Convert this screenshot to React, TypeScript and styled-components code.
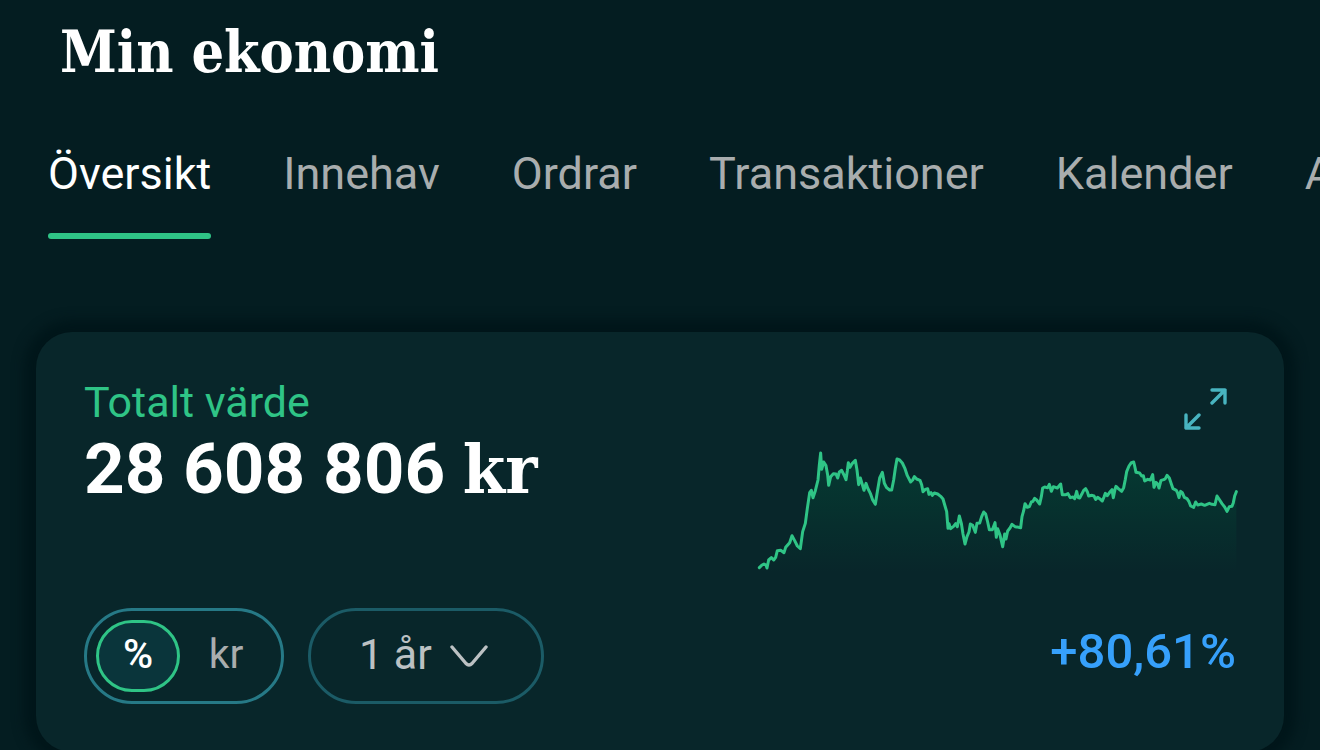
import React from "react";
import styled, { createGlobalStyle } from "styled-components";

const color = {
  page: "#041d21",
  card: "#08262a",
  green: "#2fc486",
  teal: "#48b4c0",
  muted: "#a9adae",
  blue: "#36a0fb",
};

const sans = `Roboto, "Liberation Sans", sans-serif`;
const slab = `"Roboto Slab", "DejaVu Serif Condensed", "DejaVu Serif", serif`;

const GlobalStyle = createGlobalStyle`
  * { box-sizing: border-box; }
  html { scrollbar-width: none; background: ${color.page}; }
  body { margin: 0; font-family: ${sans}; color: #fff; }
  button, select { font: inherit; color: inherit; }
`;

const Page = styled.div`
  display: flex;
  flex-direction: column;
  overflow-x: hidden;
`;

const Title = styled.h1`
  margin: 0;
  padding: 12px 60px 0;
  font: 700 57px/80px ${slab};
`;

const Tabs = styled.nav`
  display: flex;
  gap: 72px;
  padding: 54px 48px 0;
  overflow: hidden;
`;

const Tab = styled.a<{ $active?: boolean }>`
  flex: none;
  padding-bottom: 31px;
  border-bottom: 0;
  font-size: 45px;
  line-height: 56px;
  white-space: nowrap;
  text-decoration: none;
  color: ${(p) => (p.$active ? "#fff" : color.muted)};

  &::after {
    content: "";
    display: block;
    height: 6px;
    margin-top: 31px;
    border-radius: 3px;
    background: ${(p) => (p.$active ? color.green : "transparent")};
  }
`;

const Card = styled.section`
  display: flex;
  flex-direction: column;
  gap: 36px;
  margin: 62px 36px 36px;
  padding: 44px 48px 48px;
  border-radius: 36px;
  background: ${color.card};
  box-shadow: 0 0 12px 12px #01161a;
`;

const Row = styled.div<{ $align: string }>`
  display: flex;
  justify-content: space-between;
  align-items: ${(p) => p.$align};
`;

const Label = styled.h2`
  margin: 0;
  font-size: 43px;
  font-weight: 400;
  line-height: 52px;
  color: ${color.green};
`;

const Total = styled.p`
  margin: 0;
  font-size: 71px;
  font-weight: 700;
  line-height: 82px;
  white-space: nowrap;
`;

const Currency = styled.span`
  font-family: ${slab};
  font-size: 68px;
`;

const ChartColumn = styled.div`
  display: flex;
  flex-direction: column;
  align-items: flex-end;
`;

const ExpandButton = styled.button`
  display: flex;
  padding: 12px 8px;
  border: 0;
  background: none;
  color: ${color.teal};
`;

const Chart = styled.svg`
  display: block;
  width: 480px;
  height: 128px;
  overflow: visible;
`;

const Controls = styled.div`
  display: flex;
  gap: 24px;
`;

const Toggle = styled.div`
  display: flex;
  height: 96px;
  padding: 9px;
  border: 3px solid #267986;
  border-radius: 48px;
`;

const ToggleOption = styled.button<{ $active?: boolean }>`
  width: ${(p) => (p.$active ? 84 : 92)}px;
  padding: 0 0 4px;
  border: 3px solid ${(p) => (p.$active ? color.green : "transparent")};
  border-radius: 36px;
  background: ${(p) => (p.$active ? "#0a353b" : "none")};
  font-size: 41px;
  font-weight: ${(p) => (p.$active ? 500 : 400)};
  line-height: 48px;
  color: ${(p) => (p.$active ? "#fff" : color.muted)};
`;

const Period = styled.label`
  display: grid;
  align-items: center;
  width: 236px;
  height: 96px;
  border: 3px solid #1b5b66;
  border-radius: 48px;
  color: #bcc1c3;

  > * {
    grid-area: 1 / 1;
  }
`;

const PeriodSelect = styled.select`
  appearance: none;
  width: 100%;
  height: 100%;
  padding: 0 0 4px 48px;
  border: 0;
  border-radius: 48px;
  background: none;
  font-size: 43px;
`;

const Chevron = styled.svg`
  justify-self: end;
  margin-right: 52px;
  pointer-events: none;
`;

const Change = styled.output`
  padding-bottom: 8px;
  font-size: 49px;
  font-weight: 500;
  line-height: 56px;
  color: ${color.blue};
`;

const tabs = ["Översikt", "Innehav", "Ordrar", "Transaktioner", "Kalender", "Analys"];

// Portfolio value over the last year, in chart units.
const history =
  "58,413 66,405 72,402 78,405 81,414 86,390 94,383 101,390 107,382 112,362 122,361 132,368 137,352 149,338 156,317 164,332 172,348 181,356 188,305 196,280 202,235 209,188 214,181 219,203 226,182 234,150 238,105 242,69 245,118 251,96 258,107 263,135 266,166 272,140 280,131 288,132 293,144 298,126 305,121 312,135 318,149 322,122 325,98 330,112 337,100 346,91 351,120 356,164 361,144 366,160 372,181 378,160 383,174 391,190 398,210 406,223 412,185 419,144 427,127 433,160 440,173 449,180 455,180 461,150 466,115 471,87 479,90 487,99 495,116 502,137 512,156 518,150 523,140 530,147 540,151 545,164 549,185 556,178 563,176 567,193 573,188 577,196 583,189 593,192 602,199 609,207 615,228 620,245 624,295 627,281 632,296 640,290 647,281 652,290 658,258 664,280 669,312 675,342 681,320 687,306 691,282 698,286 706,307 711,280 719,279 725,260 731,246 737,252 743,276 748,299 757,299 765,278 769,322 773,296 780,315 788,350 794,312 798,327 803,303 810,294 816,283 825,290 842,293 846,260 851,242 855,221 862,232 868,230 874,216 879,214 884,205 890,210 899,222 904,200 908,174 914,171 923,173 928,163 934,184 940,170 952,174 962,162 967,194 978,194 984,191 991,203 999,201 1004,206 1010,184 1014,202 1019,204 1025,193 1031,181 1037,176 1042,185 1046,198 1056,196 1062,198 1067,208 1073,202 1079,206 1087,213 1092,201 1096,190 1102,197 1109,187 1116,179 1120,203 1125,178 1128,169 1135,176 1145,184 1151,173 1156,148 1160,125 1167,108 1174,98 1181,96 1184,108 1188,127 1199,129 1205,138 1210,137 1214,153 1223,148 1231,150 1238,134 1242,172 1248,157 1253,162 1257,174 1263,151 1271,149 1276,146 1281,136 1288,144 1294,162 1299,176 1309,181 1313,189 1317,203 1322,184 1327,188 1333,202 1341,206 1347,215 1352,228 1361,232 1367,216 1373,225 1384,222 1394,226 1408,220 1416,223 1425,224 1431,198 1437,207 1446,221 1454,231 1461,244 1468,230 1476,229 1480,218 1484,198 1489,185";

export default function App() {
  return (
    <Page>
      <GlobalStyle />
      <Title>Min ekonomi</Title>
      <Tabs aria-label="Min ekonomi">
        {tabs.map((name, i) => (
          <Tab key={name} href="#" $active={i === 0} aria-current={i === 0 ? "page" : undefined}>
            {name}
          </Tab>
        ))}
      </Tabs>
      <Card>
        <Row $align="flex-start">
          <div>
            <Label>Totalt värde</Label>
            <Total>
              28 608 806 <Currency>kr</Currency>
            </Total>
          </div>
          <ChartColumn>
            <ExpandButton type="button" aria-label="Förstora">
              <svg width="44" height="44" viewBox="0 0 44 44" fill="none" stroke="currentColor" strokeWidth="3.4" strokeLinecap="round" strokeLinejoin="round">
                <path d="M28 2h13v13M41 2L28 15M2 27v13h13M2 40L15 27" />
              </svg>
            </ExpandButton>
            <Chart viewBox="48 42 1440 384" role="img" aria-label="Utveckling 1 år">
              <defs>
                <linearGradient id="area" x1="0" y1="69" x2="0" y2="426" gradientUnits="userSpaceOnUse">
                  <stop offset="0" stopColor="#00704a" stopOpacity="0.3" />
                  <stop offset="0.45" stopColor="#00603f" stopOpacity="0.2" />
                  <stop offset="1" stopColor="#00603f" stopOpacity="0" />
                </linearGradient>
              </defs>
              <polygon points={`58,426 ${history} 1489,426`} fill="url(#area)" />
              <polyline points={history} fill="none" stroke={color.green} strokeWidth="9" strokeLinecap="round" strokeLinejoin="round" />
            </Chart>
          </ChartColumn>
        </Row>
        <Row $align="center">
          <Controls>
            <Toggle role="group" aria-label="Enhet">
              <ToggleOption type="button" $active aria-pressed="true">
                %
              </ToggleOption>
              <ToggleOption type="button" aria-pressed="false">
                kr
              </ToggleOption>
            </Toggle>
            <Period>
              <PeriodSelect aria-label="Period" defaultValue="1 år">
                <option>1 år</option>
              </PeriodSelect>
              <Chevron width="40" height="24" viewBox="0 0 40 24" fill="none" stroke="currentColor" strokeWidth="3.4" strokeLinecap="round" strokeLinejoin="round" aria-hidden="true">
                <path d="M3 3L17 19.500Q20 22.500 23 19.500L37 3" />
              </Chevron>
            </Period>
          </Controls>
          <Change>+80,61%</Change>
        </Row>
      </Card>
    </Page>
  );
}
